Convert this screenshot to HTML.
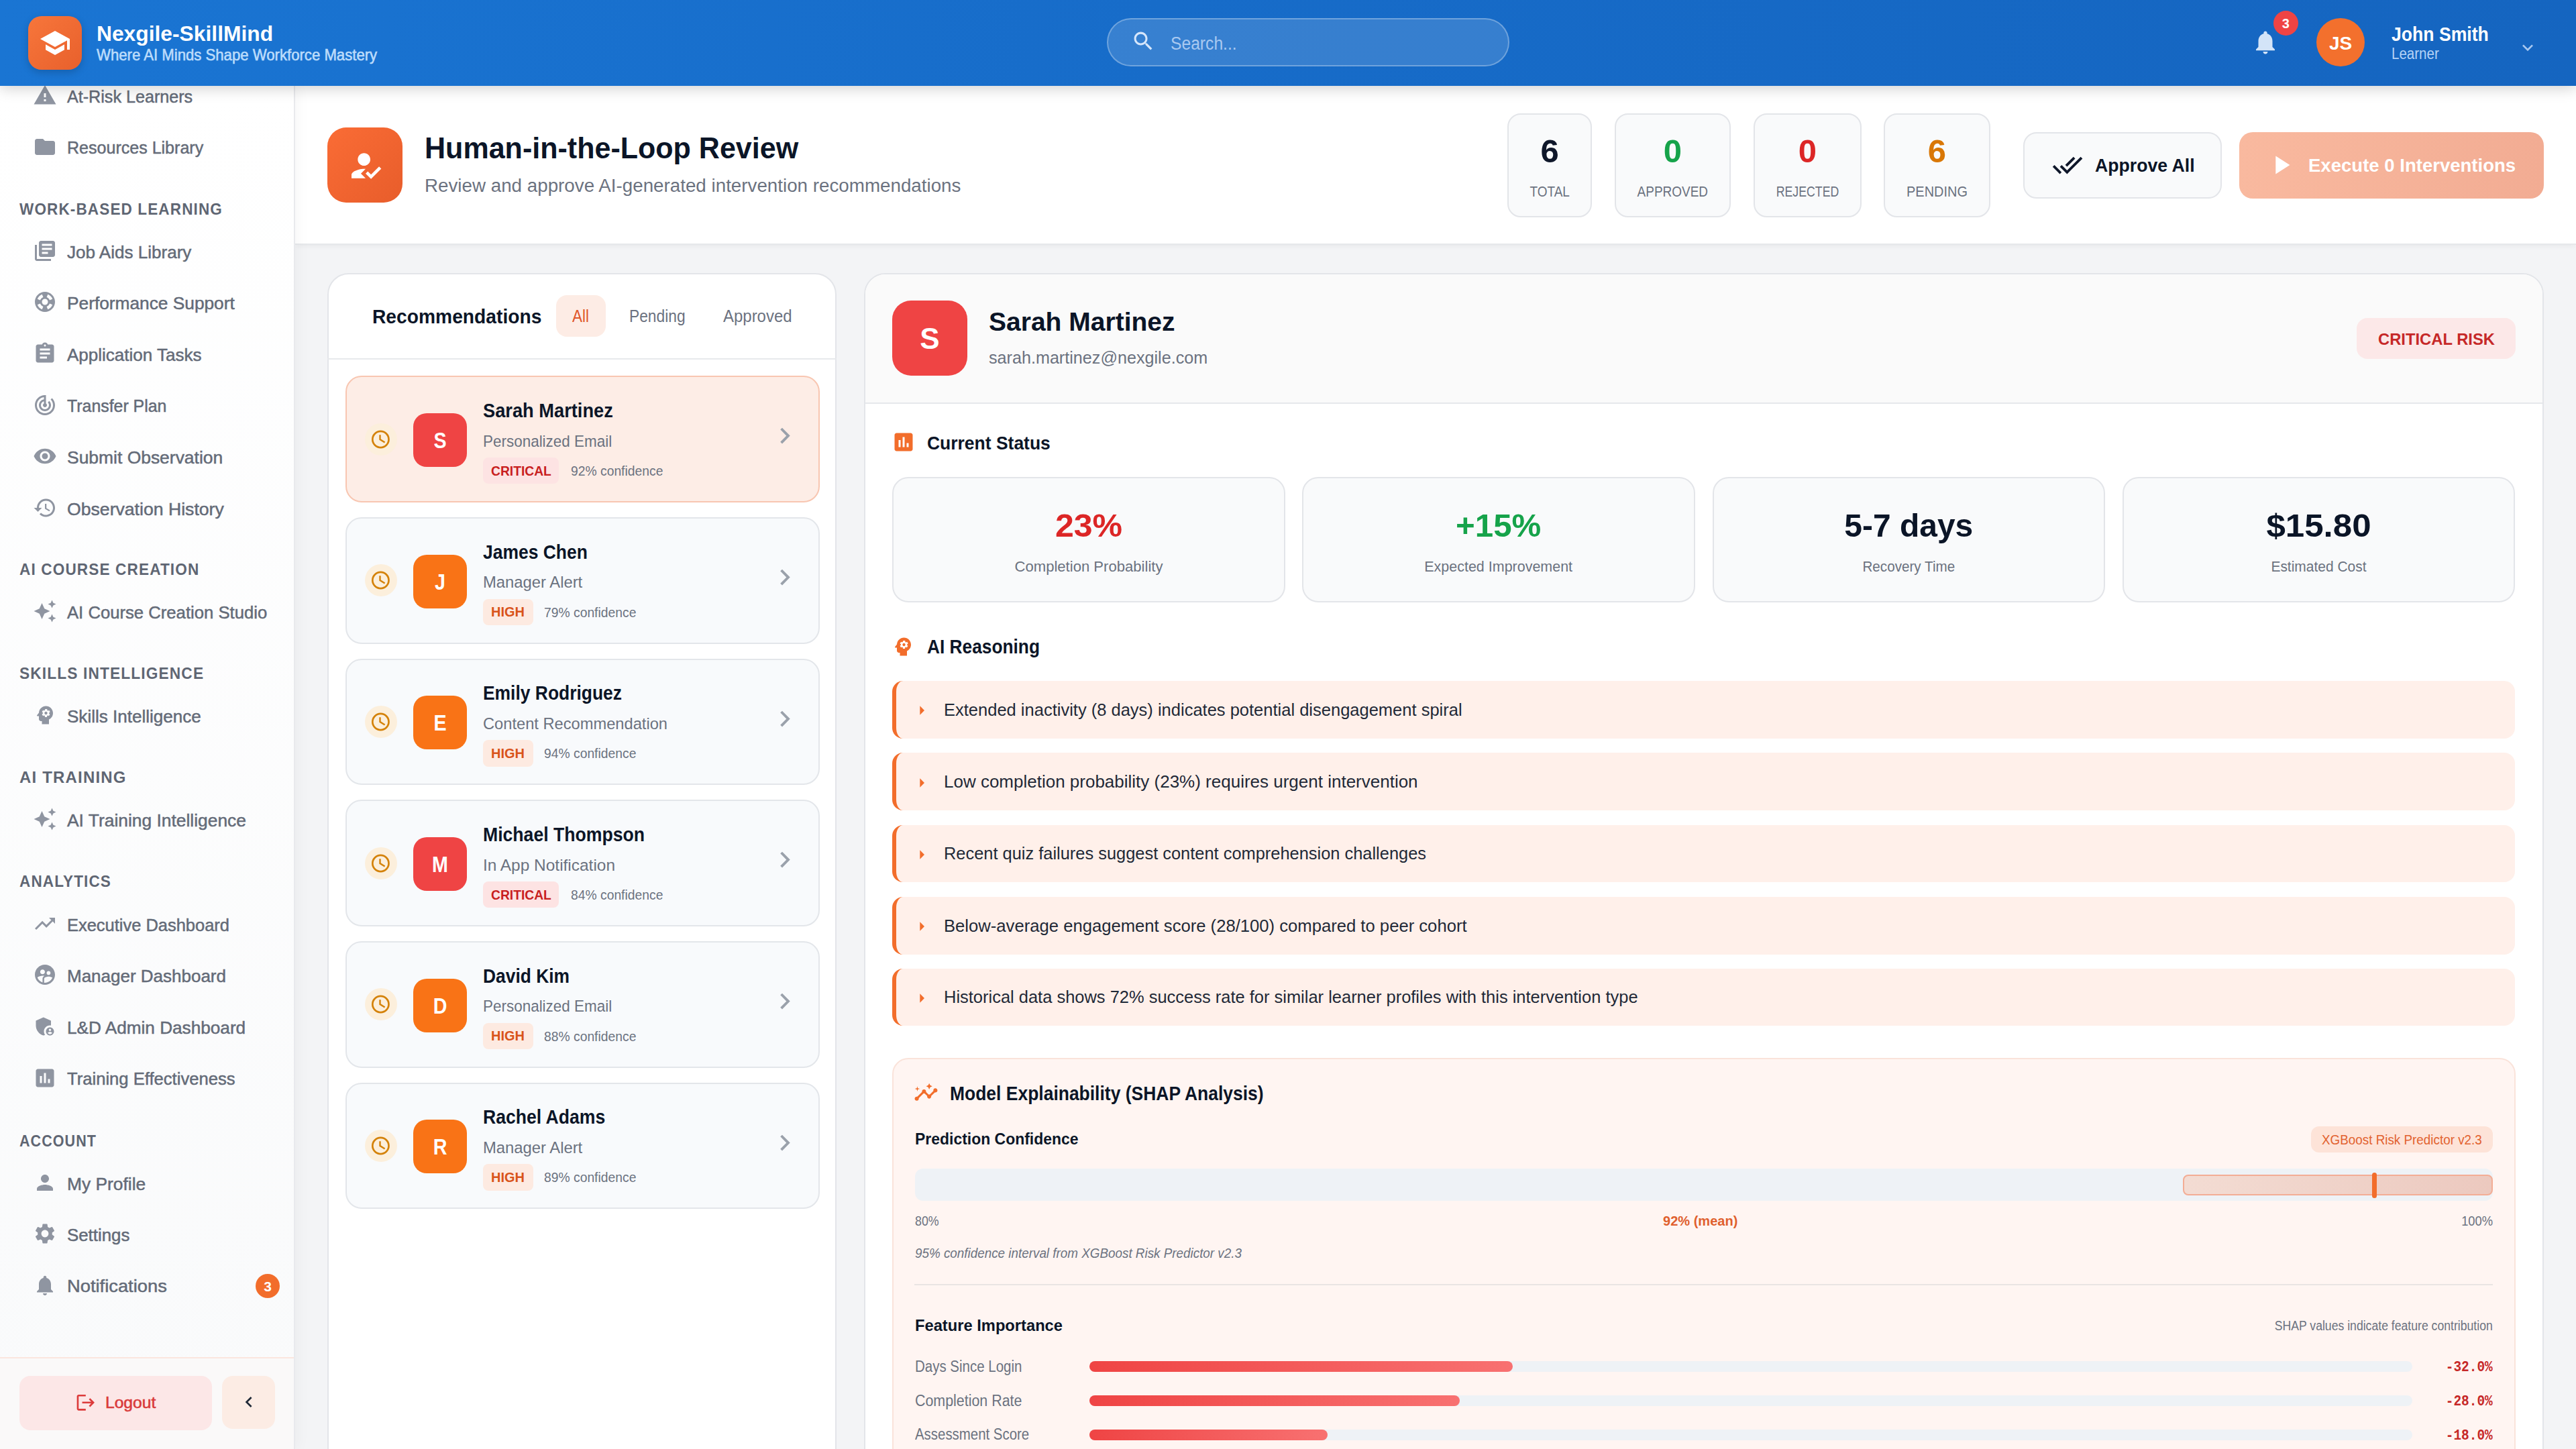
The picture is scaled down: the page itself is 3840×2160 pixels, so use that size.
<!DOCTYPE html>
<html>
<head>
<meta charset="utf-8">
<style>
html{zoom:2;background:#f3f4f6}
*{box-sizing:border-box;margin:0;padding:0}
body{width:1920px;height:1080px;overflow:hidden;position:relative;font-family:"Liberation Sans",sans-serif;background:#f3f4f6;color:#111827}
.a{position:absolute}
.t{position:absolute;line-height:1;white-space:nowrap}
.b{font-weight:bold}
svg.i{position:absolute;display:block}
/* header */
#hdr{position:absolute;left:0;top:0;width:1920px;height:64px;background:linear-gradient(90deg,#1a75d3 0%,#176cc9 45%,#1565c0 100%);box-shadow:0 2px 10px rgba(0,0,0,.18);z-index:10}
/* sidebar */
#side{position:absolute;left:0;top:64px;width:220px;height:1016px;background:linear-gradient(180deg,#ffffff 0%,#f9fafb 100%);border-right:1px solid #e9eaed;overflow:hidden;z-index:5;box-shadow:2px 0 10px rgba(0,0,0,.035)}
.nv{position:absolute;left:49.8px;line-height:1;white-space:nowrap;font-size:13px;color:#646b78;letter-spacing:-0.05px;-webkit-text-stroke:0.25px #646b78}
.sc{position:absolute;left:14.3px;line-height:1;white-space:nowrap;font-size:11.6px;color:#5f6673;font-weight:bold;letter-spacing:0.45px}
.si{position:absolute;left:24.3px;width:18px;height:18px;fill:#8f95a1}
/* main */
#main{position:absolute;left:220px;top:64px;width:1700px;height:1016px;background:linear-gradient(180deg,#eef0f3 0%,#f3f4f6 6%,#f3f4f6 100%)}
</style>
</head>
<body>
<script>(function(){var w=window.innerWidth||3840;var z=w/1920;if(z>0.2&&Math.abs(z-2)>0.01){document.documentElement.style.zoom=z;}})();</script>
<!-- ============ MAIN ============ -->
<div id="main"></div>

<!-- ============ SIDEBAR ============ -->
<div id="side">
<div class="t" style="left:49.80px;top:1.42px;font-size:13.0px;color:#646b78;transform:scaleX(0.9668);transform-origin:left;-webkit-text-stroke:0.25px #646b78;">At-Risk Learners</div>
<svg class="i" style="left:24.30px;top:-2.00px;width:18px;height:18px;fill:#8f95a1;" viewBox="0 0 24 24"><path d="M1 21h22L12 2 1 21zm12-3h-2v-2h2v2zm0-4h-2v-4h2v4z"/></svg>
<div class="t" style="left:49.80px;top:39.73px;font-size:13.0px;color:#646b78;transform:scaleX(0.9630);transform-origin:left;-webkit-text-stroke:0.25px #646b78;">Resources Library</div>
<svg class="i" style="left:24.30px;top:36.31px;width:18px;height:18px;fill:#8f95a1;" viewBox="0 0 24 24"><path d="M10 4H4c-1.1 0-1.99.9-1.99 2L2 18c0 1.1.9 2 2 2h16c1.1 0 2-.9 2-2V8c0-1.1-.9-2-2-2h-8l-2-2z"/></svg>
<div class="t b" style="left:14.30px;top:85.76px;font-size:12.0px;color:#5f6673;letter-spacing:0.6px;transform:scaleX(0.9386);transform-origin:left;">WORK-BASED LEARNING</div>
<div class="t" style="left:49.80px;top:117.32px;font-size:13.0px;color:#646b78;transform:scaleX(1.0022);transform-origin:left;-webkit-text-stroke:0.25px #646b78;">Job Aids Library</div>
<svg class="i" style="left:24.30px;top:113.90px;width:18px;height:18px;fill:#8f95a1;" viewBox="0 0 24 24"><path d="M4 6H2v14c0 1.1.9 2 2 2h14v-2H4V6zm16-4H8c-1.1 0-2 .9-2 2v12c0 1.1.9 2 2 2h12c1.1 0 2-.9 2-2V4c0-1.1-.9-2-2-2zm-1 9H9V9h10v2zm-4 4H9v-2h6v2zm4-8H9V5h10v2z"/></svg>
<div class="t" style="left:49.80px;top:155.66px;font-size:13.0px;color:#646b78;transform:scaleX(1.0107);transform-origin:left;-webkit-text-stroke:0.25px #646b78;">Performance Support</div>
<svg class="i" style="left:24.30px;top:152.24px;width:18px;height:18px;fill:#8f95a1;" viewBox="0 0 24 24"><path d="M12 2C6.48 2 2 6.48 2 12s4.48 10 10 10 10-4.48 10-10S17.52 2 12 2zm7.46 7.12l-2.78 1.15c-.51-1.36-1.58-2.44-2.95-2.94l1.15-2.78c2.1.8 3.77 2.47 4.58 4.57zM12 15c-1.66 0-3-1.34-3-3s1.34-3 3-3 3 1.34 3 3-1.34 3-3 3zM9.13 4.54l1.17 2.78c-1.38.5-2.47 1.59-2.98 2.97L4.54 9.13c.81-2.11 2.48-3.78 4.59-4.59zM4.54 14.87l2.78-1.15c.51 1.38 1.59 2.46 2.97 2.96l-1.17 2.78c-2.1-.81-3.77-2.48-4.58-4.59zm10.34 4.59l-1.15-2.78c1.37-.51 2.45-1.59 2.95-2.97l2.78 1.17c-.81 2.1-2.48 3.77-4.58 4.58z"/></svg>
<div class="t" style="left:49.80px;top:193.92px;font-size:13.0px;color:#646b78;transform:scaleX(1.0008);transform-origin:left;-webkit-text-stroke:0.25px #646b78;">Application Tasks</div>
<svg class="i" style="left:24.30px;top:190.50px;width:18px;height:18px;fill:#8f95a1;" viewBox="0 0 24 24"><path d="M19 3h-4.18C14.4 1.84 13.3 1 12 1c-1.3 0-2.4.84-2.82 2H5c-1.1 0-2 .9-2 2v14c0 1.1.9 2 2 2h14c1.1 0 2-.9 2-2V5c0-1.1-.9-2-2-2zm-7 0c.55 0 1 .45 1 1s-.45 1-1 1-1-.45-1-1 .45-1 1-1zm2 14H7v-2h7v2zm3-4H7v-2h10v2zm0-4H7V7h10v2z"/></svg>
<div class="t" style="left:49.80px;top:232.22px;font-size:13.0px;color:#646b78;transform:scaleX(0.9566);transform-origin:left;-webkit-text-stroke:0.25px #646b78;">Transfer Plan</div>
<svg class="i" style="left:24.30px;top:228.80px;width:18px;height:18px;fill:#8f95a1;" viewBox="0 0 24 24"><path d="M19.07 4.93l-1.41 1.41C19.1 7.79 20 9.79 20 12c0 4.42-3.58 8-8 8s-8-3.58-8-8c0-4.08 3.05-7.44 7-7.93v2.02C8.16 6.57 6 9.03 6 12c0 3.31 2.69 6 6 6s6-2.69 6-6c0-1.66-.67-3.16-1.76-4.24l-1.41 1.41C15.55 9.9 16 10.9 16 12c0 2.21-1.79 4-4 4s-4-1.79-4-4c0-1.86 1.28-3.41 3-3.86v2.14c-.6.35-1 .98-1 1.72 0 1.1.9 2 2 2s2-.9 2-2c0-.74-.4-1.38-1-1.72V2h-1C6.48 2 2 6.48 2 12s4.48 10 10 10 10-4.48 10-10c0-2.76-1.12-5.26-2.93-7.07z"/></svg>
<div class="t" style="left:49.80px;top:270.52px;font-size:13.0px;color:#646b78;transform:scaleX(1.0169);transform-origin:left;-webkit-text-stroke:0.25px #646b78;">Submit Observation</div>
<svg class="i" style="left:24.30px;top:267.10px;width:18px;height:18px;fill:#8f95a1;" viewBox="0 0 24 24"><path d="M12 4.5C7 4.5 2.73 7.61 1 12c1.73 4.39 6 7.5 11 7.5s9.27-3.11 11-7.5c-1.73-4.39-6-7.5-11-7.5zM12 17c-2.76 0-5-2.24-5-5s2.24-5 5-5 5 2.24 5 5-2.24 5-5 5zm0-8c-1.66 0-3 1.34-3 3s1.34 3 3 3 3-1.34 3-3-1.34-3-3-3z"/></svg>
<div class="t" style="left:49.80px;top:308.82px;font-size:13.0px;color:#646b78;transform:scaleX(1.0240);transform-origin:left;-webkit-text-stroke:0.25px #646b78;">Observation History</div>
<svg class="i" style="left:24.30px;top:305.40px;width:18px;height:18px;fill:#8f95a1;" viewBox="0 0 24 24"><path d="M13 3c-4.97 0-9 4.03-9 9H1l3.89 3.89.07.14L9 12H6c0-3.87 3.13-7 7-7s7 3.13 7 7-3.13 7-7 7c-1.93 0-3.68-.79-4.94-2.06l-1.42 1.42C8.27 19.99 10.51 21 13 21c4.97 0 9-4.03 9-9s-4.03-9-9-9zm-1 5v5l4.28 2.54.72-1.21-3.5-2.08V8H12z"/></svg>
<div class="t b" style="left:14.30px;top:354.41px;font-size:12.0px;color:#5f6673;letter-spacing:0.6px;transform:scaleX(0.9411);transform-origin:left;">AI COURSE CREATION</div>
<div class="t" style="left:49.80px;top:385.82px;font-size:13.0px;color:#646b78;transform:scaleX(0.9872);transform-origin:left;-webkit-text-stroke:0.25px #646b78;">AI Course Creation Studio</div>
<svg class="i" style="left:24.30px;top:382.40px;width:18px;height:18px;fill:#8f95a1;" viewBox="0 0 24 24"><path d="M19 9l1.25-2.75L23 5l-2.75-1.25L19 1l-1.25 2.75L15 5l2.75 1.25L19 9zm-7.5.5L9 4 6.5 9.5 1 12l5.5 2.5L9 20l2.5-5.5L17 12l-5.5-2.5zM19 15l-1.25 2.75L15 19l2.75 1.25L19 23l1.25-2.75L23 19l-2.75-1.25L19 15z"/></svg>
<div class="t b" style="left:14.30px;top:431.96px;font-size:12.0px;color:#5f6673;letter-spacing:0.6px;transform:scaleX(0.9463);transform-origin:left;">SKILLS INTELLIGENCE</div>
<div class="t" style="left:49.80px;top:463.32px;font-size:13.0px;color:#646b78;transform:scaleX(1.0018);transform-origin:left;-webkit-text-stroke:0.25px #646b78;">Skills Intelligence</div>
<svg class="i" style="left:24.30px;top:459.90px;width:18px;height:18px;fill:#8f95a1;" viewBox="0 0 24 24"><path d="M13 3C9.25 3 6.2 5.94 6.02 9.64L4.1 12.2c-.25.33-.01.8.4.8H6v3c0 1.1.9 2 2 2h1v3h7v-4.68c2.36-1.12 4-3.53 4-6.32 0-3.87-3.13-7-7-7zm3 7c0 .13-.01.26-.02.39l.83.66c.08.06.1.16.05.25l-.8 1.39c-.05.09-.16.12-.24.09l-.99-.4c-.21.16-.43.29-.67.39L14 13.83c-.01.1-.1.17-.2.17h-1.6c-.1 0-.18-.07-.2-.17l-.15-1.06c-.25-.1-.47-.23-.68-.39l-.99.4c-.09.03-.2 0-.25-.09l-.8-1.39c-.05-.08-.03-.19.05-.25l.84-.66c-.01-.13-.02-.26-.02-.39s.02-.27.04-.4l-.85-.66c-.08-.06-.1-.16-.05-.26l.8-1.38c.05-.09.15-.12.24-.09l1 .4c.2-.15.43-.29.67-.39L12.17 6.2c.01-.1.1-.17.2-.17h1.6c.1 0 .18.07.2.17l.15 1.06c.24.1.46.23.67.39l1-.4c.09-.03.2 0 .24.09l.8 1.38c.05.09.03.2-.05.26l-.85.66c.03.12.04.25.04.39zm-3-1.43c-.79 0-1.43.64-1.43 1.43s.64 1.43 1.43 1.43 1.43-.64 1.43-1.43-.64-1.43-1.43-1.43z"/></svg>
<div class="t b" style="left:14.30px;top:509.46px;font-size:12.0px;color:#5f6673;letter-spacing:0.6px;transform:scaleX(0.9983);transform-origin:left;">AI TRAINING</div>
<div class="t" style="left:49.80px;top:540.82px;font-size:13.0px;color:#646b78;transform:scaleX(1.0150);transform-origin:left;-webkit-text-stroke:0.25px #646b78;">AI Training Intelligence</div>
<svg class="i" style="left:24.30px;top:537.40px;width:18px;height:18px;fill:#8f95a1;" viewBox="0 0 24 24"><path d="M19 9l1.25-2.75L23 5l-2.75-1.25L19 1l-1.25 2.75L15 5l2.75 1.25L19 9zm-7.5.5L9 4 6.5 9.5 1 12l5.5 2.5L9 20l2.5-5.5L17 12l-5.5-2.5zM19 15l-1.25 2.75L15 19l2.75 1.25L19 23l1.25-2.75L23 19l-2.75-1.25L19 15z"/></svg>
<div class="t b" style="left:14.30px;top:586.96px;font-size:12.0px;color:#5f6673;letter-spacing:0.6px;transform:scaleX(0.9388);transform-origin:left;">ANALYTICS</div>
<div class="t" style="left:49.80px;top:618.79px;font-size:13.0px;color:#646b78;transform:scaleX(0.9791);transform-origin:left;-webkit-text-stroke:0.25px #646b78;">Executive Dashboard</div>
<svg class="i" style="left:24.30px;top:615.37px;width:18px;height:18px;fill:#8f95a1;" viewBox="0 0 24 24"><path d="M16 6l2.29 2.29-4.88 4.88-4-4L2 16.59 3.41 18l6-6 4 4 6.3-6.29L22 12V6z"/></svg>
<div class="t" style="left:49.80px;top:657.12px;font-size:13.0px;color:#646b78;transform:scaleX(0.9997);transform-origin:left;-webkit-text-stroke:0.25px #646b78;">Manager Dashboard</div>
<svg class="i" style="left:24.30px;top:653.70px;width:18px;height:18px;fill:#8f95a1;" viewBox="0 0 24 24"><path d="M12 2C6.48 2 2 6.48 2 12s4.48 10 10 10 10-4.48 10-10S17.52 2 12 2zm3.61 6.34c1.07 0 1.93.86 1.93 1.93s-.86 1.93-1.93 1.930-1.93-.86-1.93-1.93c-.01-1.07.86-1.93 1.93-1.93zm-6-1.58c1.3 0 2.36 1.06 2.36 2.36s-1.06 2.36-2.36 2.36-2.36-1.06-2.36-2.36c0-1.31 1.05-2.36 2.36-2.36zm0 9.13v3.75c-2.4-.75-4.3-2.6-5.14-4.96 1.05-1.12 3.67-1.69 5.14-1.69.53 0 1.2.08 1.9.22-1.64.87-1.9 2.02-1.9 2.68zM12 20c-.27 0-.53-.01-.79-.04v-4.07c0-1.42 2.94-2.13 4.4-2.13 1.07 0 2.92.39 3.84 1.15-1.17 2.92-4.02 5.09-7.45 5.09z"/></svg>
<div class="t" style="left:49.80px;top:695.42px;font-size:13.0px;color:#646b78;transform:scaleX(1.0064);transform-origin:left;-webkit-text-stroke:0.25px #646b78;">L&amp;D Admin Dashboard</div>
<svg class="i" style="left:24.30px;top:692.00px;width:18px;height:18px;fill:#8f95a1;" viewBox="0 0 24 24"><path d="M17 11c.34 0 .67.04 1 .09V6.27L10.5 3 3 6.27v4.91c0 4.54 3.2 8.79 7.5 9.82.55-.13 1.08-.32 1.6-.55-.69-.98-1.1-2.17-1.1-3.45 0-3.31 2.69-6 6-6zm0 2c-2.21 0-4 1.79-4 4s1.79 4 4 4 4-1.79 4-4-1.79-4-4-4zm0 1.38c.62 0 1.12.51 1.12 1.12s-.51 1.12-1.12 1.12-1.12-.51-1.12-1.12.5-1.12 1.12-1.12zm0 5.37c-.93 0-1.74-.46-2.24-1.17.05-.72 1.51-1.08 2.24-1.08s2.19.36 2.24 1.08c-.5.71-1.31 1.17-2.24 1.17z"/></svg>
<div class="t" style="left:49.80px;top:733.72px;font-size:13.0px;color:#646b78;transform:scaleX(0.9852);transform-origin:left;-webkit-text-stroke:0.25px #646b78;">Training Effectiveness</div>
<svg class="i" style="left:24.30px;top:730.30px;width:18px;height:18px;fill:#8f95a1;" viewBox="0 0 24 24"><path d="M19 3H5c-1.1 0-2 .9-2 2v14c0 1.1.9 2 2 2h14c1.1 0 2-.9 2-2V5c0-1.1-.9-2-2-2zM9 17H7v-7h2v7zm4 0h-2V7h2v10zm4 0h-2v-4h2v4z"/></svg>
<div class="t b" style="left:14.30px;top:780.49px;font-size:12.0px;color:#5f6673;letter-spacing:0.6px;transform:scaleX(0.8956);transform-origin:left;">ACCOUNT</div>
<div class="t" style="left:49.80px;top:811.75px;font-size:13.0px;color:#646b78;transform:scaleX(1.0139);transform-origin:left;-webkit-text-stroke:0.25px #646b78;">My Profile</div>
<svg class="i" style="left:24.30px;top:808.33px;width:18px;height:18px;fill:#8f95a1;" viewBox="0 0 24 24"><path d="M12 12c2.21 0 4-1.79 4-4s-1.79-4-4-4-4 1.79-4 4 1.79 4 4 4zm0 2c-2.67 0-8 1.34-8 4v2h16v-2c0-2.66-5.33-4-8-4z"/></svg>
<div class="t" style="left:49.80px;top:849.99px;font-size:13.0px;color:#646b78;transform:scaleX(0.9939);transform-origin:left;-webkit-text-stroke:0.25px #646b78;">Settings</div>
<svg class="i" style="left:24.30px;top:846.57px;width:18px;height:18px;fill:#8f95a1;" viewBox="0 0 24 24"><path d="M19.14 12.94c.04-.3.06-.61.06-.94 0-.32-.02-.64-.07-.94l2.03-1.58c.18-.14.23-.41.12-.61l-1.92-3.32c-.12-.22-.37-.29-.59-.22l-2.39.96c-.5-.38-1.03-.7-1.62-.94l-.36-2.54c-.04-.24-.24-.41-.48-.41h-3.84c-.24 0-.43.17-.47.41l-.36 2.54c-.59.24-1.13.57-1.62.94l-2.39-.96c-.22-.08-.47 0-.59.22L2.74 8.87c-.12.21-.08.47.12.61l2.03 1.58c-.05.3-.09.63-.09.94s.02.64.07.94l-2.03 1.58c-.18.14-.23.41-.12.61l1.92 3.32c.12.22.37.29.59.22l2.39-.96c.5.38 1.03.7 1.62.94l.36 2.54c.05.24.24.41.48.41h3.84c.24 0 .44-.17.47-.41l.36-2.54c.59-.24 1.13-.56 1.62-.94l2.39.96c.22.08.47 0 .59-.22l1.92-3.32c.12-.22.07-.47-.12-.61l-2.01-1.58zM12 15.6c-1.98 0-3.6-1.62-3.6-3.6s1.62-3.6 3.6-3.6 3.6 1.62 3.6 3.6-1.62 3.6-3.6 3.6z"/></svg>
<div class="t" style="left:49.80px;top:888.22px;font-size:13.0px;color:#646b78;transform:scaleX(1.0507);transform-origin:left;-webkit-text-stroke:0.25px #646b78;">Notifications</div>
<svg class="i" style="left:24.30px;top:884.80px;width:18px;height:18px;fill:#8f95a1;" viewBox="0 0 24 24"><path d="M12 22c1.1 0 2-.9 2-2h-4c0 1.1.89 2 2 2zm6-6v-5c0-3.07-1.64-5.64-4.5-6.32V4c0-.83-.67-1.5-1.5-1.5s-1.5.67-1.5 1.5v.68C7.63 5.36 6 7.92 6 11v5l-2 2v1h16v-1l-2-2z"/></svg>
<div class="a" style="left:190.60px;top:885.49px;width:18.00px;height:18.00px;border-radius:9px;background:#f26d2b"></div>
<div class="t b" style="left:190.60px;width:18.00px;text-align:center;top:889.45px;font-size:10.5px;color:#fff;">3</div>
<div class="a" style="left:0.00px;top:947.40px;width:219.00px;height:68.60px;background:#faf9f9;border-top:1px solid #fbe6de"></div>
<div class="a" style="left:14.60px;top:961.50px;width:143.50px;height:40.50px;border-radius:8px;background:#fce7e7"></div>
<svg class="i" style="left:55.90px;top:973.50px;width:15.8px;height:15.8px;fill:#dc3b3b;" viewBox="0 0 24 24"><path d="M17 7l-1.41 1.41L18.17 11H8v2h10.17l-2.58 2.58L17 17l5-5zM4 5h8V3H4c-1.1 0-2 .9-2 2v14c0 1.1.9 2 2 2h8v-2H4V5z"/></svg>
<div class="t" style="left:78.40px;top:975.33px;font-size:12.2px;color:#d93a3a;transform:scaleX(1.0085);transform-origin:left;-webkit-text-stroke:0.3px #d93a3a;">Logout</div>
<div class="a" style="left:165.60px;top:961.50px;width:39.50px;height:39.50px;border-radius:8px;background:#fcece4"></div>
<svg class="i" style="left:177.30px;top:973.00px;width:16px;height:16px;fill:#1f2937;" viewBox="0 0 24 24"><path d="M15.41 7.41L14 6l-6 6 6 6 1.41-1.41L10.83 12z"/></svg>
</div>

<!-- ============ HEADER ============ -->
<div id="hdr">
<div class="a" style="left:21.00px;top:12.00px;width:40.00px;height:40.00px;border-radius:10px;background:linear-gradient(135deg,#f7763b 0%,#e8602c 100%);box-shadow:0 2px 6px rgba(0,0,0,.18)"></div>
<svg class="i" style="left:29.00px;top:20.00px;width:24px;height:24px;fill:#fff;" viewBox="0 0 24 24"><path d="M5 13.18v4L12 21l7-3.82v-4L12 17l-7-3.82zM12 3L1 9l11 6 9-4.91V17h2V9L12 3z"/></svg>
<div class="t b" style="left:71.80px;top:17.32px;font-size:15.9px;color:#fff;transform:scaleX(0.9994);transform-origin:left;">Nexgile-SkillMind</div>
<div class="t" style="left:71.80px;top:35.31px;font-size:11.6px;color:#bcdcfb;transform:scaleX(0.9553);transform-origin:left;-webkit-text-stroke:0.3px #bcdcfb;">Where AI Minds Shape Workforce Mastery</div>
<div class="a" style="left:825.00px;top:13.60px;width:300.00px;height:36.00px;border-radius:18px;background:rgba(255,255,255,.14);border:1px solid rgba(255,255,255,.28)"></div>
<svg class="i" style="left:843.20px;top:21.70px;width:18.4px;height:18.4px;fill:#d6e6fb;" viewBox="0 0 24 24"><path d="M15.5 14h-.79l-.28-.27C15.41 12.59 16 11.11 16 9.5 16 5.91 13.09 3 9.5 3S3 5.91 3 9.5 5.91 16 9.5 16c1.61 0 3.09-.59 4.23-1.57l.27.28v.79l5 4.99L20.49 19l-4.99-5zm-6 0C7.01 14 5 11.99 5 9.5S7.01 5 9.5 5 14 7.01 14 9.5 11.99 14 9.5 14z"/></svg>
<div class="t" style="left:872.50px;top:25.15px;font-size:14.2px;color:#a9c9f0;transform:scaleX(0.8682);transform-origin:left;">Search...</div>
<svg class="i" style="left:1678.00px;top:21.00px;width:21px;height:21px;fill:#d3e4f8;" viewBox="0 0 24 24"><path d="M12 22c1.1 0 2-.9 2-2h-4c0 1.1.89 2 2 2zm6-6v-5c0-3.07-1.64-5.64-4.5-6.32V4c0-.83-.67-1.5-1.5-1.5s-1.5.67-1.5 1.5v.68C7.63 5.36 6 7.92 6 11v5l-2 2v1h16v-1l-2-2z"/></svg>
<div class="a" style="left:1694.40px;top:8.00px;width:18.50px;height:18.50px;border-radius:50%;background:#ef4444"></div>
<div class="t b" style="left:1694.40px;width:18.50px;text-align:center;top:12.53px;font-size:10px;color:#fff;">3</div>
<div class="a" style="left:1726.50px;top:13.40px;width:36.00px;height:36.00px;border-radius:50%;background:#f3702d"></div>
<div class="t b" style="left:1726.50px;width:36.00px;text-align:center;top:25.38px;font-size:14px;color:#fff;">JS</div>
<div class="t b" style="left:1782.40px;top:18.44px;font-size:14.5px;color:#fff;transform:scaleX(0.9170);transform-origin:left;">John Smith</div>
<div class="t" style="left:1782.40px;top:34.42px;font-size:11.55px;color:#b5d3f6;transform:scaleX(0.8892);transform-origin:left;">Learner</div>
<svg class="i" style="left:1876.00px;top:27.50px;width:16px;height:16px;fill:#a8c8f0;" viewBox="0 0 24 24"><path d="M16.59 8.59L12 13.17 7.41 8.59 6 10l6 6 6-6z"/></svg>
</div>

<div class="a" style="left:220.00px;top:64.00px;width:1700.00px;height:118.50px;background:#fff;border-bottom:1px solid #e6e8eb;box-shadow:0 1px 4px rgba(0,0,0,.05)"></div>
<div class="a" style="left:244.00px;top:95.00px;width:56.00px;height:56.00px;border-radius:14px;background:linear-gradient(135deg,#fa6c35 0%,#e85d2b 100%)"></div>
<svg class="i" style="left:258.50px;top:109.50px;width:28px;height:28px;fill:#fff;" viewBox="0 0 24 24"><path d="M9 17l3-2.94c-.39-.04-.68-.06-1-.06-2.67 0-8 1.34-8 4v2h9l-3-3zm2-5c2.21 0 4-1.79 4-4s-1.79-4-4-4-4 1.79-4 4 1.79 4 4 4zm4.47 8.5L12 17l1.4-1.41 2.07 2.08 5.13-5.17 1.4 1.41z"/></svg>
<div class="t b" style="left:316.50px;top:98.93px;font-size:22.4px;color:#0b1527;transform:scaleX(0.9609);transform-origin:left;">Human-in-the-Loop Review</div>
<div class="t" style="left:316.50px;top:131.15px;font-size:14.2px;color:#6b7280;transform:scaleX(0.9779);transform-origin:left;">Review and approve AI-generated intervention recommendations</div>
<div class="a" style="left:1123.50px;top:84.30px;width:63.20px;height:77.60px;background:#f9fafb;border:1px solid #e3e5e9;border-radius:10px"></div>
<div class="t b" style="left:1123.50px;width:63.20px;text-align:center;top:100.64px;font-size:24.5px;color:#0f172a;">6</div>
<div class="t" style="left:1123.50px;width:63.20px;text-align:center;top:137.51px;font-size:11.3px;color:#6b7280;transform:scaleX(0.8396);transform-origin:center;">TOTAL</div>
<div class="a" style="left:1203.50px;top:84.30px;width:86.30px;height:77.60px;background:#f9fafb;border:1px solid #e3e5e9;border-radius:10px"></div>
<div class="t b" style="left:1203.50px;width:86.30px;text-align:center;top:100.64px;font-size:24.5px;color:#16a34a;">0</div>
<div class="t" style="left:1203.50px;width:86.30px;text-align:center;top:137.51px;font-size:11.3px;color:#6b7280;transform:scaleX(0.8394);transform-origin:center;">APPROVED</div>
<div class="a" style="left:1307.00px;top:84.30px;width:80.50px;height:77.60px;background:#f9fafb;border:1px solid #e3e5e9;border-radius:10px"></div>
<div class="t b" style="left:1307.00px;width:80.50px;text-align:center;top:100.64px;font-size:24.5px;color:#dc2626;">0</div>
<div class="t" style="left:1307.00px;width:80.50px;text-align:center;top:137.51px;font-size:11.3px;color:#6b7280;transform:scaleX(0.7847);transform-origin:center;">REJECTED</div>
<div class="a" style="left:1404.00px;top:84.30px;width:79.50px;height:77.60px;background:#f9fafb;border:1px solid #e3e5e9;border-radius:10px"></div>
<div class="t b" style="left:1404.00px;width:79.50px;text-align:center;top:100.64px;font-size:24.5px;color:#d97706;">6</div>
<div class="t" style="left:1404.00px;width:79.50px;text-align:center;top:137.51px;font-size:11.3px;color:#6b7280;transform:scaleX(0.8838);transform-origin:center;">PENDING</div>
<div class="a" style="left:1508.00px;top:98.50px;width:148.00px;height:49.30px;background:#f9fafb;border:1px solid #e3e5e9;border-radius:10px"></div>
<svg class="i" style="left:1529.30px;top:111.40px;width:23px;height:23px;fill:#0f172a;" viewBox="0 0 24 24"><path d="M18 7l-1.41-1.41-6.34 6.34 1.41 1.41L18 7zm4.24-1.41L11.66 16.17 7.48 12l-1.41 1.41L11.66 19l12-12-1.42-1.41zM.41 13.41L6 19l1.41-1.41L1.83 12 .41 13.41z"/></svg>
<div class="t b" style="left:1561.30px;top:116.05px;font-size:14.2px;color:#0b1527;transform:scaleX(0.9394);transform-origin:left;">Approve All</div>
<div class="a" style="left:1669.00px;top:98.50px;width:227.00px;height:49.30px;background:linear-gradient(90deg,#f9b99f,#f2ac93);border-radius:10px"></div>
<svg class="i" style="left:1688.30px;top:111.30px;width:23px;height:23px;fill:#fff;" viewBox="0 0 24 24"><path d="M8 5v14l11-7z"/></svg>
<div class="t b" style="left:1720.70px;top:116.05px;font-size:14.2px;color:#fff;transform:scaleX(0.9700);transform-origin:left;">Execute 0 Interventions</div>
<div class="a" style="left:244.20px;top:203.50px;width:379.30px;height:996.50px;background:#fff;border:1px solid #e3e5e9;border-radius:16px"></div>
<div class="t b" style="left:277.40px;top:228.62px;font-size:14.85px;color:#0b1527;transform:scaleX(0.9503);transform-origin:left;">Recommendations</div>
<div class="a" style="left:414.70px;top:220.00px;width:37.00px;height:31.00px;background:#fdece5;border-radius:8px"></div>
<div class="t" style="left:426.50px;top:229.57px;font-size:12.6px;color:#e0572a;transform:scaleX(0.8929);transform-origin:left;">All</div>
<div class="t" style="left:468.90px;top:229.57px;font-size:12.6px;color:#6b7280;transform:scaleX(0.9044);transform-origin:left;">Pending</div>
<div class="t" style="left:539.20px;top:229.57px;font-size:12.6px;color:#6b7280;transform:scaleX(0.9514);transform-origin:left;">Approved</div>
<div class="a" style="left:244.20px;top:267.00px;width:379.30px;height:1.00px;background:#e7e9ec"></div>
<div class="a" style="left:257.40px;top:280.20px;width:353.40px;height:94.30px;background:#fdede6;border:1px solid #f8c6b1;border-radius:12px"></div>
<div class="a" style="left:272.00px;top:315.35px;width:24.00px;height:24.00px;border-radius:50%;background:#fcefdc"></div>
<svg class="i" style="left:274px;top:317.35px;width:20px;height:20px" viewBox="0 0 20 20"><circle cx="9.7" cy="10" r="6.05" fill="none" stroke="#d4820a" stroke-width="1.35"/><path d="M9.25 6.6V10L12.8 12.3" fill="none" stroke="#d4820a" stroke-width="1.2"/></svg>
<div class="a" style="left:308.00px;top:308.00px;width:40.00px;height:40.00px;border-radius:10px;background:#ef4444"></div>
<div class="t b" style="left:308.00px;width:40.00px;text-align:center;top:320.47px;font-size:16.3px;color:#fff;transform:scaleX(0.88);">S</div>
<div class="t b" style="left:360.00px;top:299.03px;font-size:14.35px;color:#0b1527;transform:scaleX(0.9497);transform-origin:left;">Sarah Martinez</div>
<div class="t" style="left:360.00px;top:322.82px;font-size:12.25px;color:#6b7280;transform:scaleX(0.9165);transform-origin:left;">Personalized Email</div>
<div class="a" style="left:360.00px;top:341.00px;width:56.70px;height:19.70px;background:#fde3e3;border-radius:4px"></div>
<div class="t b" style="left:365.95px;top:346.31px;font-size:9.8px;color:#c81e1e;transform:scaleX(0.9832);transform-origin:left;">CRITICAL</div>
<div class="t" style="left:425.60px;top:346.07px;font-size:10.1px;color:#6b7280;transform:scaleX(0.9562);transform-origin:left;">92% confidence</div>
<svg class="i" style="left:578px;top:315.20px;width:14px;height:20px" viewBox="0 0 14 20"><path d="M4.3 4.5L9.5 9.8L4.3 15.1" fill="none" stroke="#9aa1ab" stroke-width="1.95"/></svg>
<div class="a" style="left:257.40px;top:385.52px;width:353.40px;height:94.30px;background:#f8fafc;border:1px solid #e3e6ea;border-radius:12px"></div>
<div class="a" style="left:272.00px;top:420.67px;width:24.00px;height:24.00px;border-radius:50%;background:#fcefdc"></div>
<svg class="i" style="left:274px;top:422.67px;width:20px;height:20px" viewBox="0 0 20 20"><circle cx="9.7" cy="10" r="6.05" fill="none" stroke="#d4820a" stroke-width="1.35"/><path d="M9.25 6.6V10L12.8 12.3" fill="none" stroke="#d4820a" stroke-width="1.2"/></svg>
<div class="a" style="left:308.00px;top:413.32px;width:40.00px;height:40.00px;border-radius:10px;background:#f97316"></div>
<div class="t b" style="left:308.00px;width:40.00px;text-align:center;top:425.79px;font-size:16.3px;color:#fff;transform:scaleX(0.88);">J</div>
<div class="t b" style="left:360.00px;top:404.35px;font-size:14.35px;color:#0b1527;transform:scaleX(0.9217);transform-origin:left;">James Chen</div>
<div class="t" style="left:360.00px;top:428.14px;font-size:12.25px;color:#6b7280;transform:scaleX(0.9716);transform-origin:left;">Manager Alert</div>
<div class="a" style="left:360.00px;top:446.32px;width:37.50px;height:19.70px;background:#fdeae1;border-radius:4px"></div>
<div class="t b" style="left:365.95px;top:451.63px;font-size:9.8px;color:#d9541b;transform:scaleX(1.0204);transform-origin:left;">HIGH</div>
<div class="t" style="left:405.50px;top:451.39px;font-size:10.1px;color:#6b7280;transform:scaleX(0.9562);transform-origin:left;">79% confidence</div>
<svg class="i" style="left:578px;top:420.52px;width:14px;height:20px" viewBox="0 0 14 20"><path d="M4.3 4.5L9.5 9.8L4.3 15.1" fill="none" stroke="#9aa1ab" stroke-width="1.95"/></svg>
<div class="a" style="left:257.40px;top:490.84px;width:353.40px;height:94.30px;background:#f8fafc;border:1px solid #e3e6ea;border-radius:12px"></div>
<div class="a" style="left:272.00px;top:525.99px;width:24.00px;height:24.00px;border-radius:50%;background:#fcefdc"></div>
<svg class="i" style="left:274px;top:527.99px;width:20px;height:20px" viewBox="0 0 20 20"><circle cx="9.7" cy="10" r="6.05" fill="none" stroke="#d4820a" stroke-width="1.35"/><path d="M9.25 6.6V10L12.8 12.3" fill="none" stroke="#d4820a" stroke-width="1.2"/></svg>
<div class="a" style="left:308.00px;top:518.64px;width:40.00px;height:40.00px;border-radius:10px;background:#f97316"></div>
<div class="t b" style="left:308.00px;width:40.00px;text-align:center;top:531.11px;font-size:16.3px;color:#fff;transform:scaleX(0.88);">E</div>
<div class="t b" style="left:360.00px;top:509.67px;font-size:14.35px;color:#0b1527;transform:scaleX(0.9209);transform-origin:left;">Emily Rodriguez</div>
<div class="t" style="left:360.00px;top:533.46px;font-size:12.25px;color:#6b7280;transform:scaleX(0.9661);transform-origin:left;">Content Recommendation</div>
<div class="a" style="left:360.00px;top:551.64px;width:37.50px;height:19.70px;background:#fdeae1;border-radius:4px"></div>
<div class="t b" style="left:365.95px;top:556.95px;font-size:9.8px;color:#d9541b;transform:scaleX(1.0204);transform-origin:left;">HIGH</div>
<div class="t" style="left:405.50px;top:556.71px;font-size:10.1px;color:#6b7280;transform:scaleX(0.9562);transform-origin:left;">94% confidence</div>
<svg class="i" style="left:578px;top:525.84px;width:14px;height:20px" viewBox="0 0 14 20"><path d="M4.3 4.5L9.5 9.8L4.3 15.1" fill="none" stroke="#9aa1ab" stroke-width="1.95"/></svg>
<div class="a" style="left:257.40px;top:596.16px;width:353.40px;height:94.30px;background:#f8fafc;border:1px solid #e3e6ea;border-radius:12px"></div>
<div class="a" style="left:272.00px;top:631.31px;width:24.00px;height:24.00px;border-radius:50%;background:#fcefdc"></div>
<svg class="i" style="left:274px;top:633.31px;width:20px;height:20px" viewBox="0 0 20 20"><circle cx="9.7" cy="10" r="6.05" fill="none" stroke="#d4820a" stroke-width="1.35"/><path d="M9.25 6.6V10L12.8 12.3" fill="none" stroke="#d4820a" stroke-width="1.2"/></svg>
<div class="a" style="left:308.00px;top:623.96px;width:40.00px;height:40.00px;border-radius:10px;background:#ef4444"></div>
<div class="t b" style="left:308.00px;width:40.00px;text-align:center;top:636.43px;font-size:16.3px;color:#fff;transform:scaleX(0.88);">M</div>
<div class="t b" style="left:360.00px;top:614.99px;font-size:14.35px;color:#0b1527;transform:scaleX(0.9276);transform-origin:left;">Michael Thompson</div>
<div class="t" style="left:360.00px;top:638.78px;font-size:12.25px;color:#6b7280;transform:scaleX(0.9975);transform-origin:left;">In App Notification</div>
<div class="a" style="left:360.00px;top:656.96px;width:56.70px;height:19.70px;background:#fde3e3;border-radius:4px"></div>
<div class="t b" style="left:365.95px;top:662.27px;font-size:9.8px;color:#c81e1e;transform:scaleX(0.9832);transform-origin:left;">CRITICAL</div>
<div class="t" style="left:425.60px;top:662.03px;font-size:10.1px;color:#6b7280;transform:scaleX(0.9562);transform-origin:left;">84% confidence</div>
<svg class="i" style="left:578px;top:631.16px;width:14px;height:20px" viewBox="0 0 14 20"><path d="M4.3 4.5L9.5 9.8L4.3 15.1" fill="none" stroke="#9aa1ab" stroke-width="1.95"/></svg>
<div class="a" style="left:257.40px;top:701.48px;width:353.40px;height:94.30px;background:#f8fafc;border:1px solid #e3e6ea;border-radius:12px"></div>
<div class="a" style="left:272.00px;top:736.63px;width:24.00px;height:24.00px;border-radius:50%;background:#fcefdc"></div>
<svg class="i" style="left:274px;top:738.63px;width:20px;height:20px" viewBox="0 0 20 20"><circle cx="9.7" cy="10" r="6.05" fill="none" stroke="#d4820a" stroke-width="1.35"/><path d="M9.25 6.6V10L12.8 12.3" fill="none" stroke="#d4820a" stroke-width="1.2"/></svg>
<div class="a" style="left:308.00px;top:729.28px;width:40.00px;height:40.00px;border-radius:10px;background:#f97316"></div>
<div class="t b" style="left:308.00px;width:40.00px;text-align:center;top:741.75px;font-size:16.3px;color:#fff;transform:scaleX(0.88);">D</div>
<div class="t b" style="left:360.00px;top:720.31px;font-size:14.35px;color:#0b1527;transform:scaleX(0.9194);transform-origin:left;">David Kim</div>
<div class="t" style="left:360.00px;top:744.10px;font-size:12.25px;color:#6b7280;transform:scaleX(0.9165);transform-origin:left;">Personalized Email</div>
<div class="a" style="left:360.00px;top:762.28px;width:37.50px;height:19.70px;background:#fdeae1;border-radius:4px"></div>
<div class="t b" style="left:365.95px;top:767.59px;font-size:9.8px;color:#d9541b;transform:scaleX(1.0204);transform-origin:left;">HIGH</div>
<div class="t" style="left:405.50px;top:767.35px;font-size:10.1px;color:#6b7280;transform:scaleX(0.9562);transform-origin:left;">88% confidence</div>
<svg class="i" style="left:578px;top:736.48px;width:14px;height:20px" viewBox="0 0 14 20"><path d="M4.3 4.5L9.5 9.8L4.3 15.1" fill="none" stroke="#9aa1ab" stroke-width="1.95"/></svg>
<div class="a" style="left:257.40px;top:806.80px;width:353.40px;height:94.30px;background:#f8fafc;border:1px solid #e3e6ea;border-radius:12px"></div>
<div class="a" style="left:272.00px;top:841.95px;width:24.00px;height:24.00px;border-radius:50%;background:#fcefdc"></div>
<svg class="i" style="left:274px;top:843.95px;width:20px;height:20px" viewBox="0 0 20 20"><circle cx="9.7" cy="10" r="6.05" fill="none" stroke="#d4820a" stroke-width="1.35"/><path d="M9.25 6.6V10L12.8 12.3" fill="none" stroke="#d4820a" stroke-width="1.2"/></svg>
<div class="a" style="left:308.00px;top:834.60px;width:40.00px;height:40.00px;border-radius:10px;background:#f97316"></div>
<div class="t b" style="left:308.00px;width:40.00px;text-align:center;top:847.07px;font-size:16.3px;color:#fff;transform:scaleX(0.88);">R</div>
<div class="t b" style="left:360.00px;top:825.63px;font-size:14.35px;color:#0b1527;transform:scaleX(0.9265);transform-origin:left;">Rachel Adams</div>
<div class="t" style="left:360.00px;top:849.42px;font-size:12.25px;color:#6b7280;transform:scaleX(0.9716);transform-origin:left;">Manager Alert</div>
<div class="a" style="left:360.00px;top:867.60px;width:37.50px;height:19.70px;background:#fdeae1;border-radius:4px"></div>
<div class="t b" style="left:365.95px;top:872.91px;font-size:9.8px;color:#d9541b;transform:scaleX(1.0204);transform-origin:left;">HIGH</div>
<div class="t" style="left:405.50px;top:872.67px;font-size:10.1px;color:#6b7280;transform:scaleX(0.9562);transform-origin:left;">89% confidence</div>
<svg class="i" style="left:578px;top:841.80px;width:14px;height:20px" viewBox="0 0 14 20"><path d="M4.3 4.5L9.5 9.8L4.3 15.1" fill="none" stroke="#9aa1ab" stroke-width="1.95"/></svg>
<div class="a" style="left:644.20px;top:203.60px;width:1251.70px;height:996.40px;background:#fff;border:1px solid #e3e5e9;border-radius:16px;overflow:hidden"></div>
<div class="a" style="left:645.20px;top:204.60px;width:1249.70px;height:96.40px;background:#fafafa;border-radius:15px 15px 0 0;border-bottom:1px solid #e6e8eb"></div>
<div class="a" style="left:665.00px;top:224.00px;width:56.00px;height:56.00px;background:#ef4444;border-radius:14px"></div>
<div class="t b" style="left:665.00px;width:56.00px;text-align:center;top:241.39px;font-size:22px;color:#fff;">S</div>
<div class="t b" style="left:736.90px;top:229.90px;font-size:19.7px;color:#0b1527;transform:scaleX(0.9904);transform-origin:left;">Sarah Martinez</div>
<div class="t" style="left:736.90px;top:260.18px;font-size:13.3px;color:#6b7280;transform:scaleX(0.9460);transform-origin:left;">sarah.martinez@nexgile.com</div>
<div class="a" style="left:1756.40px;top:237.00px;width:118.40px;height:30.50px;background:#fce8e8;border-radius:8px"></div>
<div class="t b" style="left:1772.30px;top:246.96px;font-size:12px;color:#c62828;transform:scaleX(0.9911);transform-origin:left;">CRITICAL RISK</div>
<svg class="i" style="left:664.65px;top:320.65px;width:18px;height:18px;fill:#f26d2b;" viewBox="0 0 24 24"><path d="M19 3H5c-1.1 0-2 .9-2 2v14c0 1.1.9 2 2 2h14c1.1 0 2-.9 2-2V5c0-1.1-.9-2-2-2zM9 17H7v-7h2v7zm4 0h-2V7h2v10zm4 0h-2v-4h2v4z"/></svg>
<div class="t b" style="left:691.00px;top:323.28px;font-size:14px;color:#0b1527;transform:scaleX(0.9451);transform-origin:left;">Current Status</div>
<div class="a" style="left:665.00px;top:355.60px;width:293.00px;height:93.40px;background:#f9fafb;border:1px solid #e3e5e9;border-radius:12px"></div>
<div class="t b" style="left:665.00px;width:293.00px;text-align:center;top:379.44px;font-size:24.5px;color:#dc2626;transform:scaleX(1.0215);transform-origin:center;">23%</div>
<div class="t" style="left:665.00px;width:293.00px;text-align:center;top:417.16px;font-size:11.25px;color:#6b7280;transform:scaleX(0.9817);transform-origin:center;">Completion Probability</div>
<div class="a" style="left:970.60px;top:355.60px;width:292.70px;height:93.40px;background:#f9fafb;border:1px solid #e3e5e9;border-radius:12px"></div>
<div class="t b" style="left:970.60px;width:292.70px;text-align:center;top:379.44px;font-size:24.5px;color:#16a34a;transform:scaleX(1.0040);transform-origin:center;">+15%</div>
<div class="t" style="left:970.60px;width:292.70px;text-align:center;top:417.16px;font-size:11.25px;color:#6b7280;transform:scaleX(0.9543);transform-origin:center;">Expected Improvement</div>
<div class="a" style="left:1276.70px;top:355.60px;width:292.30px;height:93.40px;background:#f9fafb;border:1px solid #e3e5e9;border-radius:12px"></div>
<div class="t b" style="left:1276.70px;width:292.30px;text-align:center;top:379.44px;font-size:24.5px;color:#0b1527;transform:scaleX(0.9790);transform-origin:center;">5-7 days</div>
<div class="t" style="left:1276.70px;width:292.30px;text-align:center;top:417.16px;font-size:11.25px;color:#6b7280;transform:scaleX(0.9183);transform-origin:center;">Recovery Time</div>
<div class="a" style="left:1582.00px;top:355.60px;width:292.50px;height:93.40px;background:#f9fafb;border:1px solid #e3e5e9;border-radius:12px"></div>
<div class="t b" style="left:1582.00px;width:292.50px;text-align:center;top:379.44px;font-size:24.5px;color:#0b1527;transform:scaleX(1.0422);transform-origin:center;">$15.80</div>
<div class="t" style="left:1582.00px;width:292.50px;text-align:center;top:417.16px;font-size:11.25px;color:#6b7280;transform:scaleX(0.9321);transform-origin:center;">Estimated Cost</div>
<svg class="i" style="left:664.00px;top:473.15px;width:18px;height:18px;fill:#f26d2b;" viewBox="0 0 24 24"><path d="M13 3C9.25 3 6.2 5.94 6.02 9.64L4.1 12.2c-.25.33-.01.8.4.8H6v3c0 1.1.9 2 2 2h1v3h7v-4.68c2.36-1.12 4-3.53 4-6.32 0-3.87-3.13-7-7-7zm3 7c0 .13-.01.26-.02.39l.83.66c.08.06.1.16.05.25l-.8 1.39c-.05.09-.16.12-.24.09l-.99-.4c-.21.16-.43.29-.67.39L14 13.83c-.01.1-.1.17-.2.17h-1.6c-.1 0-.18-.07-.2-.17l-.15-1.06c-.25-.1-.47-.23-.68-.39l-.99.4c-.09.03-.2 0-.25-.09l-.8-1.39c-.05-.08-.03-.19.05-.25l.84-.66c-.01-.13-.02-.26-.02-.39s.02-.27.04-.4l-.85-.66c-.08-.06-.1-.16-.05-.26l.8-1.38c.05-.09.15-.12.24-.09l1 .4c.2-.15.43-.29.67-.39L12.17 6.2c.01-.1.1-.17.2-.17h1.6c.1 0 .18.07.2.17l.15 1.06c.24.1.46.23.67.39l1-.4c.09-.03.2 0 .24.09l.8 1.38c.05.09.03.2-.05.26l-.85.66c.03.12.04.25.04.39zm-3-1.43c-.79 0-1.43.64-1.43 1.43s.64 1.43 1.43 1.43 1.43-.64 1.43-1.43-.64-1.43-1.43-1.43z"/></svg>
<div class="t b" style="left:691.00px;top:475.04px;font-size:14.3px;color:#0b1527;transform:scaleX(0.9194);transform-origin:left;">AI Reasoning</div>
<div class="a" style="left:664.90px;top:507.50px;width:1209.70px;height:42.80px;background:#fff0ea;border-left:3px solid #f26d2b;border-radius:8px"></div>
<svg class="i" style="left:678.97px;top:521.60px;width:16px;height:16px;fill:#f26d2b;" viewBox="0 0 24 24"><path d="M10 17l5-5-5-5v10z"/></svg>
<div class="t" style="left:703.60px;top:522.75px;font-size:12.75px;color:#1f2937;transform:scaleX(1.0001);transform-origin:left;">Extended inactivity (8 days) indicates potential disengagement spiral</div>
<div class="a" style="left:664.90px;top:561.20px;width:1209.70px;height:42.80px;background:#fff0ea;border-left:3px solid #f26d2b;border-radius:8px"></div>
<svg class="i" style="left:678.97px;top:575.30px;width:16px;height:16px;fill:#f26d2b;" viewBox="0 0 24 24"><path d="M10 17l5-5-5-5v10z"/></svg>
<div class="t" style="left:703.60px;top:576.45px;font-size:12.75px;color:#1f2937;transform:scaleX(1.0194);transform-origin:left;">Low completion probability (23%) requires urgent intervention</div>
<div class="a" style="left:664.90px;top:614.80px;width:1209.70px;height:42.80px;background:#fff0ea;border-left:3px solid #f26d2b;border-radius:8px"></div>
<svg class="i" style="left:678.97px;top:628.90px;width:16px;height:16px;fill:#f26d2b;" viewBox="0 0 24 24"><path d="M10 17l5-5-5-5v10z"/></svg>
<div class="t" style="left:703.60px;top:630.05px;font-size:12.75px;color:#1f2937;transform:scaleX(0.9965);transform-origin:left;">Recent quiz failures suggest content comprehension challenges</div>
<div class="a" style="left:664.90px;top:668.50px;width:1209.70px;height:42.80px;background:#fff0ea;border-left:3px solid #f26d2b;border-radius:8px"></div>
<svg class="i" style="left:678.97px;top:682.60px;width:16px;height:16px;fill:#f26d2b;" viewBox="0 0 24 24"><path d="M10 17l5-5-5-5v10z"/></svg>
<div class="t" style="left:703.60px;top:683.75px;font-size:12.75px;color:#1f2937;transform:scaleX(1.0054);transform-origin:left;">Below-average engagement score (28/100) compared to peer cohort</div>
<div class="a" style="left:664.90px;top:721.90px;width:1209.70px;height:42.80px;background:#fff0ea;border-left:3px solid #f26d2b;border-radius:8px"></div>
<svg class="i" style="left:678.97px;top:736.00px;width:16px;height:16px;fill:#f26d2b;" viewBox="0 0 24 24"><path d="M10 17l5-5-5-5v10z"/></svg>
<div class="t" style="left:703.60px;top:737.15px;font-size:12.75px;color:#1f2937;transform:scaleX(0.9986);transform-origin:left;">Historical data shows 72% success rate for similar learner profiles with this intervention type</div>
<div class="a" style="left:664.90px;top:788.70px;width:1209.90px;height:411.30px;background:#fff5f2;border:1px solid #fae3da;border-radius:12px"></div>
<svg class="i" style="left:681.20px;top:805.10px;width:18.5px;height:18.5px;fill:#f26d2b;" viewBox="0 0 24 24"><path d="M21 8c-1.45 0-2.26 1.44-1.93 2.51l-3.55 3.56c-.3-.09-.74-.09-1.04 0l-2.55-2.55C12.27 10.45 11.46 9 10 9c-1.45 0-2.27 1.44-1.93 2.52l-4.56 4.55C2.44 15.74 1 16.55 1 18c0 1.1.9 2 2 2 1.45 0 2.26-1.44 1.93-2.51l4.55-4.56c.3.09.74.09 1.04 0l2.55 2.55C12.73 16.55 13.54 18 15 18c1.45 0 2.27-1.44 1.93-2.52l3.56-3.55c1.07.33 2.51-.48 2.51-1.93 0-1.1-.9-2-2-2zM15 9l.94-2.07L18 6l-2.06-.93L15 3l-.92 2.07L12 6l2.08.93zM3.5 11L4 9l2-.5L4 8l-.5-2L3 8l-2 .5L3 9z"/></svg>
<div class="t b" style="left:708.20px;top:807.91px;font-size:14.5px;color:#0b1527;transform:scaleX(0.9124);transform-origin:left;">Model Explainability (SHAP Analysis)</div>
<div class="t b" style="left:682.00px;top:842.86px;font-size:12px;color:#0b1527;transform:scaleX(0.9563);transform-origin:left;">Prediction Confidence</div>
<div class="a" style="left:1722.40px;top:839.40px;width:135.70px;height:19.60px;background:#fde3d8;border-radius:6px"></div>
<div class="t" style="left:1730.50px;top:845.14px;font-size:9.95px;color:#e2622f;transform:scaleX(0.9473);transform-origin:left;">XGBoost Risk Predictor v2.3</div>
<div class="a" style="left:682.00px;top:871.20px;width:1176.10px;height:23.80px;background:#eef2f6;border-radius:6px"></div>
<div class="a" style="left:1626.80px;top:875.40px;width:231.30px;height:15.40px;background:linear-gradient(90deg,#f3dcd3,#ecc9bf);border:1px solid #f3ad95;border-radius:4px"></div>
<div class="a" style="left:1768.00px;top:874.00px;width:3.30px;height:19.00px;background:#f26d2b;border-radius:2px"></div>
<div class="t" style="left:682.00px;top:905.10px;font-size:10.2px;color:#6b7280;transform:scaleX(0.8730);transform-origin:left;">80%</div>
<div class="t b" style="left:1239.40px;top:905.02px;font-size:10.1px;color:#e0602e;transform:scaleX(0.9927);transform-origin:left;">92% (mean)</div>
<div class="t" style="right:61.90px;top:905.10px;font-size:10.2px;color:#6b7280;transform:scaleX(0.9017);transform-origin:right;">100%</div>
<div class="t" style="left:682.00px;top:929.13px;font-size:10px;color:#6b7280;font-style:italic;transform:scaleX(0.9421);transform-origin:left;">95% confidence interval from XGBoost Risk Predictor v2.3</div>
<div class="a" style="left:681.50px;top:957.10px;width:1176.60px;height:1.00px;background:#e9e4e3"></div>
<div class="t b" style="left:682.00px;top:981.86px;font-size:12px;color:#0b1527;transform:scaleX(0.9877);transform-origin:left;">Feature Importance</div>
<div class="t" style="right:61.90px;top:982.93px;font-size:10px;color:#6b7280;transform:scaleX(0.8814);transform-origin:right;">SHAP values indicate feature contribution</div>
<div class="t" style="left:682.00px;top:1012.82px;font-size:11.5px;color:#6b7280;transform:scaleX(0.8905);transform-origin:left;">Days Since Login</div>
<div class="a" style="left:812.10px;top:1014.60px;width:986.10px;height:8.00px;background:#eef2f6;border-radius:4px"></div>
<div class="a" style="left:812.10px;top:1014.60px;width:315.55px;height:8.00px;background:linear-gradient(90deg,#ef4444,#f87171);border-radius:4px"></div>
<div class="t b" style="right:61.90px;top:1013.87px;font-size:10.8px;color:#c62828;font-family:'Liberation Mono',monospace;transform:scaleX(0.9000);transform-origin:right;">-32.0%</div>
<div class="t" style="left:682.00px;top:1038.27px;font-size:11.5px;color:#6b7280;transform:scaleX(0.9305);transform-origin:left;">Completion Rate</div>
<div class="a" style="left:812.10px;top:1040.05px;width:986.10px;height:8.00px;background:#eef2f6;border-radius:4px"></div>
<div class="a" style="left:812.10px;top:1040.05px;width:276.11px;height:8.00px;background:linear-gradient(90deg,#ef4444,#f87171);border-radius:4px"></div>
<div class="t b" style="right:61.90px;top:1039.32px;font-size:10.8px;color:#c62828;font-family:'Liberation Mono',monospace;transform:scaleX(0.9000);transform-origin:right;">-28.0%</div>
<div class="t" style="left:682.00px;top:1063.72px;font-size:11.5px;color:#6b7280;transform:scaleX(0.8876);transform-origin:left;">Assessment Score</div>
<div class="a" style="left:812.10px;top:1065.50px;width:986.10px;height:8.00px;background:#eef2f6;border-radius:4px"></div>
<div class="a" style="left:812.10px;top:1065.50px;width:177.50px;height:8.00px;background:linear-gradient(90deg,#ef4444,#f87171);border-radius:4px"></div>
<div class="t b" style="right:61.90px;top:1064.77px;font-size:10.8px;color:#c62828;font-family:'Liberation Mono',monospace;transform:scaleX(0.9000);transform-origin:right;">-18.0%</div>
</body>
</html>
